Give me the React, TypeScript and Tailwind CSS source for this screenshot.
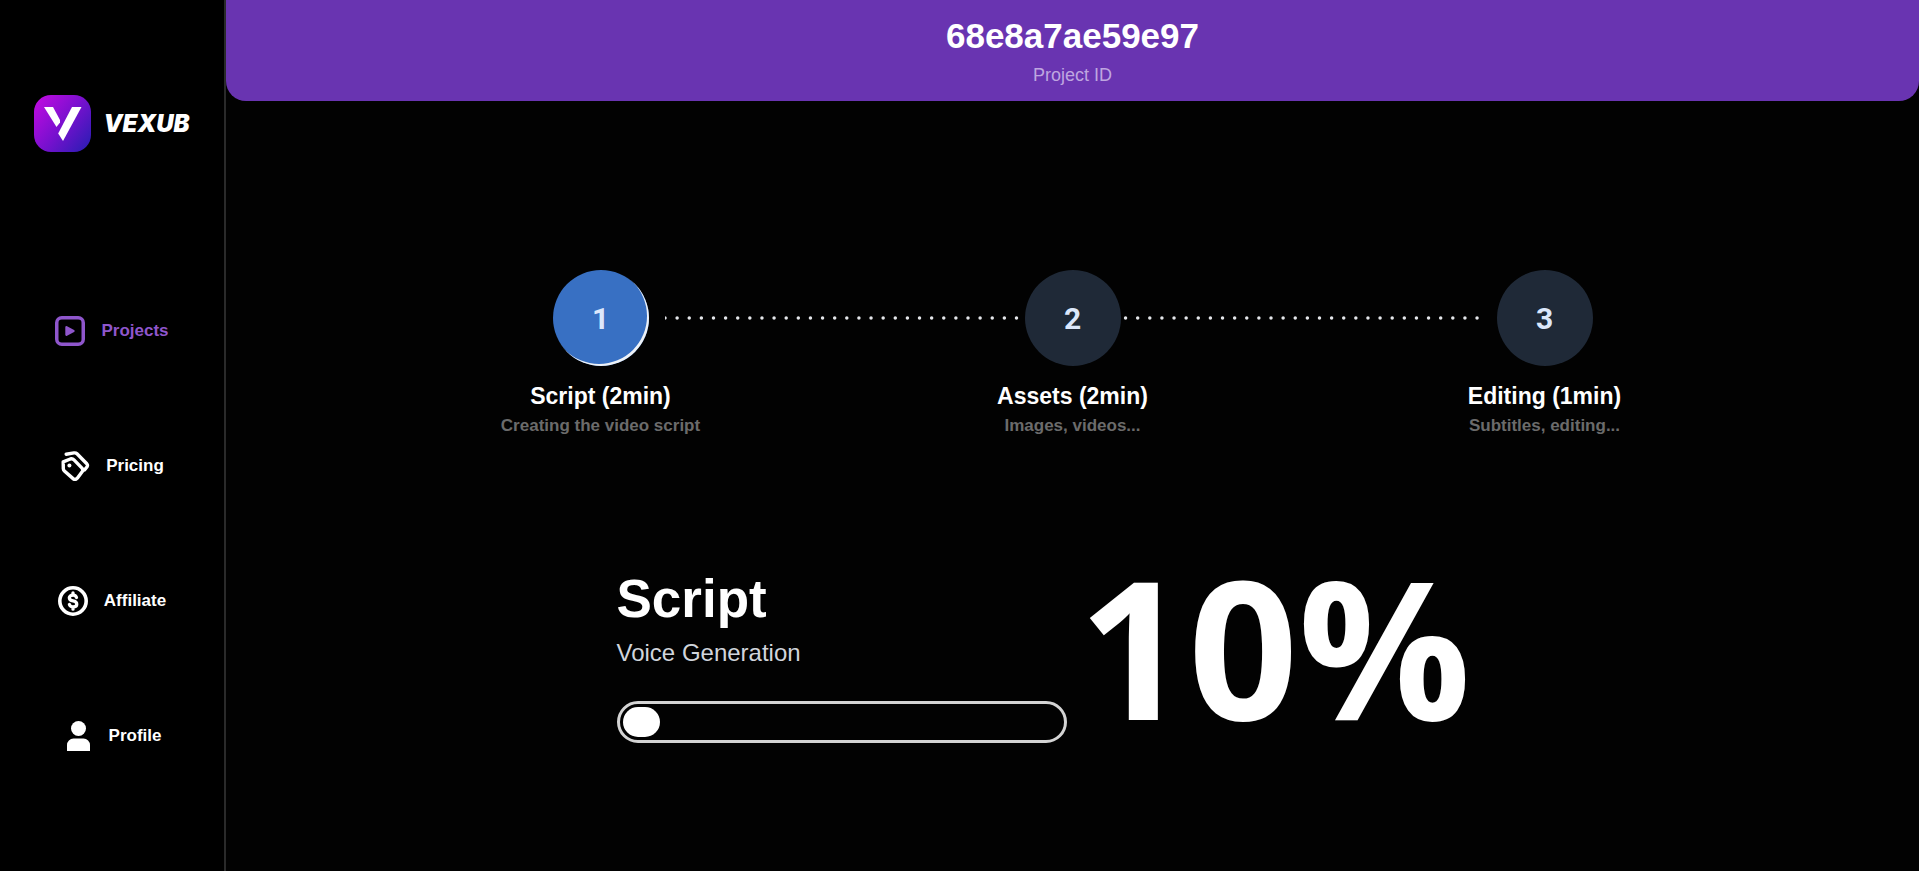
import type { ReactNode } from 'react'

interface NavItem {
  label: string
  href: string
  icon: ReactNode
  active?: boolean
}

interface Step {
  number: number
  title: string
  description: string
  active?: boolean
}

const navItems: NavItem[] = [
  { label: 'Projects', href: '#projects', icon: <ProjectsIcon />, active: true },
  { label: 'Pricing', href: '#pricing', icon: <PricingIcon /> },
  { label: 'Affiliate', href: '#affiliate', icon: <AffiliateIcon /> },
  { label: 'Profile', href: '#profile', icon: <ProfileIcon /> },
]

const steps: Step[] = [
  { number: 1, title: 'Script (2min)', description: 'Creating the video script', active: true },
  { number: 2, title: 'Assets (2min)', description: 'Images, videos...' },
  { number: 3, title: 'Editing (1min)', description: 'Subtitles, editing...' },
]

function ProjectsIcon() {
  return (
    <svg viewBox="0 0 30 30" className="size-[30px]" fill="none" aria-hidden="true">
      <rect x="1.75" y="1.75" width="26.5" height="26.5" rx="5" stroke="currentColor" strokeWidth="3.5" />
      <path d="M11.5 11.3 18.5 15l-7 3.7z" fill="currentColor" stroke="currentColor" strokeWidth="2.4" strokeLinejoin="round" />
    </svg>
  )
}

function PricingIcon() {
  return (
    <svg viewBox="0 0 30 30" className="size-[30px]" fill="none" stroke="currentColor" strokeWidth="3.4" strokeLinecap="round" strokeLinejoin="round" aria-hidden="true">
      <path d="M3.2 10.8 10.300 8q2.2-.6 3.700.9l8 8.200q1.400 1.700.3 3.400l-5 6.700q-2 2.200-4.200.4L4.400 20q-1-.9-1.100-2.300z" />
      <path d="M6.200 3.200 14 1.900q1.800-.3 3 .9l9.800 10q1.200 1.300.3 2.900L24.500 19" />
      <circle cx="9.400" cy="14.400" r="2" fill="currentColor" stroke="none" />
    </svg>
  )
}

function AffiliateIcon() {
  return (
    <svg viewBox="0 0 30 30" className="size-[30px]" fill="none" stroke="currentColor" strokeLinecap="round" aria-hidden="true">
      <circle cx="15" cy="15" r="13.200" strokeWidth="3.600" />
      <path d="M18.500 11.500q-.8-2.300-3.500-2.300c-5 0-4.800 5 0 5.700 5 .8 5 5.900 0 5.900q-2.800 0-3.600-2.300M15 6.800v2M15 21.200v2" strokeWidth="3.300" />
    </svg>
  )
}

function ProfileIcon() {
  return (
    <svg viewBox="0 0 30 30" className="size-[30px]" fill="currentColor" aria-hidden="true">
      <circle cx="15.500" cy="7.500" r="7.500" />
      <path d="M4 30v-6a6.500 6.500 0 0 1 6.500-6.500h10a6.500 6.500 0 0 1 6.500 6.500V30z" />
    </svg>
  )
}

function Logo() {
  return (
    <a href="#home" className="flex items-center justify-center gap-3">
      <svg viewBox="0 0 57 57" className="size-[57px]" aria-hidden="true">
        <defs>
          <linearGradient id="logo-bg" x1="0" y1="0.1" x2="1" y2="0.9">
            <stop offset="0" stopColor="#c00be0" />
            <stop offset="0.5" stopColor="#7a10cf" />
            <stop offset="1" stopColor="#2c1cb4" />
          </linearGradient>
        </defs>
        <rect width="57" height="57" rx="17" fill="url(#logo-bg)" />
        <path d="M10 12h9l7 13v2.500L22.500 32z" fill="#fff" />
        <path d="M38 12h9.500L29 46l-4.800-7.500 1.800-3.500z" fill="#fff" />
      </svg>
      <span className="font-[Inter] text-2xl font-black italic">VEXUB</span>
    </a>
  )
}

function Sidebar() {
  return (
    <aside className="flex w-[226px] shrink-0 flex-col border-r-2 border-[#2a2a2a] bg-black pt-[95px]">
      <Logo />
      <nav className="mt-[164px] flex flex-col gap-[105px]">
        {navItems.map((item) => (
          <a
            key={item.label}
            href={item.href}
            className={`flex h-[30px] items-center justify-center gap-4 text-[17px] font-bold ${
              item.active ? 'text-[#8f56cc]' : 'text-white'
            }`}
          >
            {item.icon}
            {item.label}
          </a>
        ))}
      </nav>
    </aside>
  )
}

function Stepper() {
  return (
    <section className="relative w-full max-w-[1416px]">
      {/* Dotted connector, runs behind the middle circle */}
      <svg className="absolute top-[46px] left-[calc(100%/6+64px)] h-1 w-[calc(200%/3-128px)]" aria-hidden="true">
        <line x1="0" y1="2" x2="100%" y2="2" stroke="#e5e7eb" strokeWidth="3.500" strokeLinecap="round" strokeDasharray="0 12.120" />
      </svg>

      <ol className="relative grid grid-cols-3">
        {steps.map((step) => (
          <li key={step.number} className="flex flex-col items-center text-center font-bold">
            <div
              className={`flex size-24 items-center justify-center rounded-full font-[Roboto] text-[30px] text-[#dbe7fb] ${
                step.active ? 'bg-[#3870c3] shadow-[inset_-2px_-2px_0_#eef2f7]' : 'bg-[#1f2937]'
              }`}
            >
              {step.number}
            </div>
            <h2 className="mt-4 text-[23px] leading-7">{step.title}</h2>
            <p className="mt-1 text-[17px] leading-6 text-[#6b6b6b]">{step.description}</p>
          </li>
        ))}
      </ol>
    </section>
  )
}

function Progress({ value }: { value: number }) {
  return (
    <section className="mt-28 grid w-full max-w-[912px] grid-cols-2 items-center gap-3">
      <div>
        <h1 className="text-[53px] leading-[60px] font-bold">Script</h1>
        <p id="progress-label" className="mt-2 text-2xl text-gray-300">
          Voice Generation
        </p>
        <div
          role="progressbar"
          aria-labelledby="progress-label"
          aria-valuenow={value}
          aria-valuemin={0}
          aria-valuemax={100}
          className="mt-8 h-[42px] rounded-full border-[3px] border-[#d4d4d4] p-[3px]"
        >
          <div className="h-full rounded-full bg-white" style={{ width: `calc(${value}% - 6px)` }} />
        </div>
      </div>
      <p className="pb-5 font-['Open_Sans'] text-[192px] leading-none font-bold">{value}%</p>
    </section>
  )
}

export default function App() {
  return (
    <div className="flex min-h-screen bg-[#020202] font-['Liberation_Sans',Arial,sans-serif] text-white">
      <Sidebar />
      <main className="flex min-w-0 flex-1 flex-col items-center">
        <header className="mb-[169px] flex w-full flex-col items-center rounded-b-[20px] bg-[#6934b1] pt-4 pb-3">
          <p className="text-[35px] leading-10 font-bold">68e8a7ae59e97</p>
          <p className="mt-1.5 text-lg leading-[27px] text-[#bfa6e0]">Project ID</p>
        </header>
        <Stepper />
        <Progress value={10} />
      </main>
    </div>
  )
}
